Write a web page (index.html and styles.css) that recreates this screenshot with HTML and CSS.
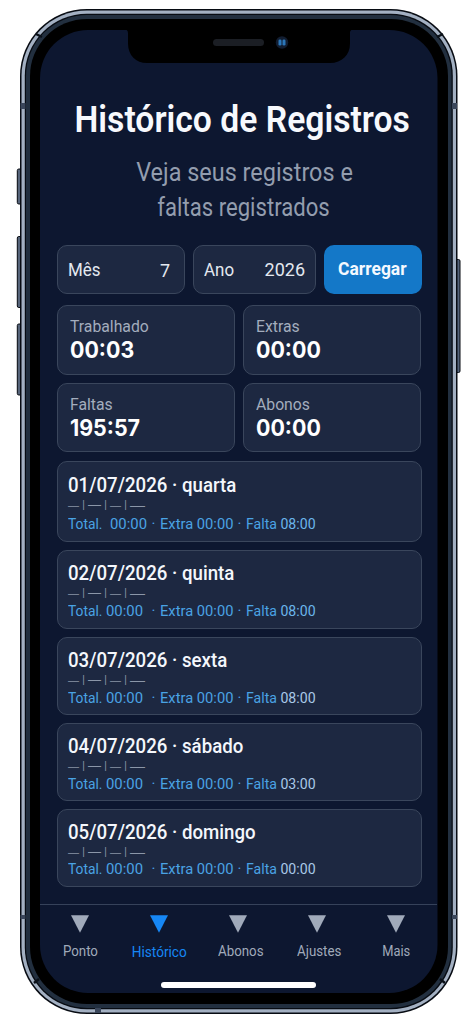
FILE: index.html
```html
<!DOCTYPE html>
<html lang="pt-BR">
<head>
<meta charset="utf-8">
<title>Histórico de Registros</title>
<link rel="stylesheet" href="styles.css">
</head>
<body>
<div class="stage">
<svg class="device" width="473" height="1024" viewBox="0 0 473 1024" aria-hidden="true">
  <g fill="#56647a" stroke="#05090f" stroke-width="1">
    <rect x="17.3" y="169" width="6" height="35" rx="1.5"/>
    <rect x="17.3" y="236.5" width="6" height="71" rx="1.5"/>
    <rect x="17.3" y="324" width="6" height="71" rx="1.5"/>
    <rect x="454" y="259.5" width="6" height="113" rx="1.5"/>
  </g>
  <rect x="20" y="9" width="437.5" height="1005" rx="67" fill="#070b12"/>
  <rect x="21.5" y="10.5" width="434.5" height="1002" rx="65.5" fill="#a3b0c2"/>
  <rect x="24.8" y="13.8" width="428" height="995.5" rx="62" fill="#070b12"/>
  <rect x="26" y="15" width="425.5" height="993" rx="61" fill="#222f3f"/>
  <rect x="30" y="19" width="418" height="985" rx="57" fill="#000"/>
  <g fill="#3a465a">
    <rect x="20.5" y="103" width="5" height="6"/>
    <rect x="452" y="103" width="5" height="6"/>
    <rect x="20.5" y="915" width="5" height="4"/>
    <rect x="452" y="915" width="5" height="4"/>
    <rect x="95" y="1008" width="6" height="5"/>
  </g>
  <path d="M36 34l6 3M437 37l6-3M34 983l5-4M440 979l5 4" stroke="#0a1018" stroke-width="2.5"/>
  <rect x="40" y="30" width="397.5" height="963" rx="48" fill="#0d1730"/>
  <path d="M124 29.500c3 0 4 1 4 4v10c0 12 8 19.500 19 19.500h183c12 0 20-8 20-19.500v-10c0-3 1-4 4-4z" fill="#000"/>
  <rect x="213" y="39" width="51" height="7" rx="3.5" fill="#1b1e24"/>
  <circle cx="282" cy="42.5" r="6.2" fill="#121d30"/>
  <rect x="278.5" y="39.500" width="3" height="6" rx="1.3" fill="#2b76b8"/>
  <rect x="282.5" y="39.500" width="3" height="6" rx="1.3" fill="#2b76b8"/>
</svg>
<div class="screen">
  <header class="head">
    <h1 class="title"><span>Histórico de Registros</span></h1>
    <p class="sub"><span>Veja seus registros e</span><span class="second">faltas registrados</span></p>
  </header>
  <div class="filters">
    <div class="field month"><span class="name">Mês</span><span class="low">7</span></div>
    <div class="field year"><span class="name">Ano</span><span>2026</span></div>
    <button class="load"><span>Carregar</span></button>
  </div>
  <div class="stats">
    <div class="stat"><span class="label">Trabalhado</span><b>00:03</b></div>
    <div class="stat"><span class="label">Extras</span><b>00:00</b></div>
    <div class="stat"><span class="label">Faltas</span><b>195:57</b></div>
    <div class="stat"><span class="label">Abonos</span><b>00:00</b></div>
  </div>
  <div class="days">
    <article class="day d1"><h2>01/07/2026 · quarta</h2><div class="marks"><i>—</i><s>|</s><i class="w13">—</i><s>|</s><i>—</i><s>|</s><i class="w15">—</i></div>
      <p class="tot"><span class="tl">Total.</span><span class="th">00:00</span><span class="dot">·</span><span class="ex">Extra 00:00</span><span class="dot">·</span><span class="fa">Falta <em>08:00</em></span></p></article>
    <article class="day d2"><h2>02/07/2026 · quinta</h2><div class="marks"><i>—</i><s>|</s><i class="w13">—</i><s>|</s><i>—</i><s>|</s><i class="w15">—</i></div>
      <p class="tot"><span class="tl">Total.</span><span class="th">00:00</span><span class="dot">·</span><span class="ex">Extra 00:00</span><span class="dot">·</span><span class="fa">Falta <em>08:00</em></span></p></article>
    <article class="day d3"><h2>03/07/2026 · sexta</h2><div class="marks"><i>—</i><s>|</s><i class="w13">—</i><s>|</s><i>—</i><s>|</s><i class="w15">—</i></div>
      <p class="tot"><span class="tl">Total.</span><span class="th">00:00</span><span class="dot">·</span><span class="ex">Extra 00:00</span><span class="dot">·</span><span class="fa">Falta <em>08:00</em></span></p></article>
    <article class="day d4"><h2>04/07/2026 · sábado</h2><div class="marks"><i>—</i><s>|</s><i class="w13">—</i><s>|</s><i>—</i><s>|</s><i class="w15">—</i></div>
      <p class="tot"><span class="tl">Total.</span><span class="th">00:00</span><span class="dot">·</span><span class="ex">Extra 00:00</span><span class="dot">·</span><span class="fa">Falta <em>03:00</em></span></p></article>
    <article class="day d5"><h2>05/07/2026 · domingo</h2><div class="marks"><i>—</i><s>|</s><i class="w13">—</i><s>|</s><i>—</i><s>|</s><i class="w15">—</i></div>
      <p class="tot"><span class="tl">Total.</span><span class="th">00:00</span><span class="dot">·</span><span class="ex">Extra 00:00</span><span class="dot">·</span><span class="fa">Falta <em>00:00</em></span></p></article>
  </div>
  <nav class="tabs">
    <a class="tab t1"><svg width="18" height="18" viewBox="0 0 18 18"><path d="M0 .3h18L9 17.700z"/></svg><span>Ponto</span></a>
    <a class="tab t2 on"><svg width="18" height="18" viewBox="0 0 18 18"><path d="M0 .3h18L9 17.700z"/></svg><span>Histórico</span></a>
    <a class="tab t3"><svg width="18" height="18" viewBox="0 0 18 18"><path d="M0 .3h18L9 17.700z"/></svg><span>Abonos</span></a>
    <a class="tab t4"><svg width="18" height="18" viewBox="0 0 18 18"><path d="M0 .3h18L9 17.700z"/></svg><span>Ajustes</span></a>
    <a class="tab t5"><svg width="18" height="18" viewBox="0 0 18 18"><path d="M0 .3h18L9 17.700z"/></svg><span>Mais</span></a>
  </nav>
  <div class="home"></div>
</div>
</div>
</body>
</html>
```
FILE: styles.css
```css
* { box-sizing: border-box; }
body { margin: 0; background: #fff; font-family: Roboto, "Liberation Sans", sans-serif; }
h1, h2, p { margin: 0; }
.stage { position: relative; width: 473px; height: 1024px; overflow: hidden; }
.device { position: absolute; inset: 0; }
.screen { position: relative; margin: 30px 0 0 40px; width: 397px; height: 963px; padding-top: 67px; display: flex; flex-direction: column; }

.head { height: 148px; display: flex; flex-direction: column; align-items: center; color: #f7f9fd; white-space: nowrap; }
.title { font-size: 36px; line-height: 46px; font-weight: 600; padding-left: 8px; }
.title span { display: inline-block; transform: scaleX(.936); }
.sub { margin-top: 12px; font-size: 25px; line-height: 35px; color: #939dae; padding-left: 12px; display: flex; flex-direction: column; align-items: center; }
.sub span { transform: scaleX(.938); }
.sub .second { transform: scaleX(.885); padding-right: 3px; }

.filters { display: flex; gap: 8px; padding-left: 17px; height: 49px; }
.field { display: flex; justify-content: space-between; align-items: center; border: 1px solid #3a465c; border-radius: 10px; background: #1d2841; color: #e3e8f0; font-size: 18px; }
.name { transform: scaleX(.94); transform-origin: left; }
.month { width: 128px; padding: 0 14px 0 10px; }
.year { width: 123px; padding: 0 10px 0 10px; }
.low { padding-top: 2px; }
.load { width: 98px; border: 0; border-radius: 10px; background: #1478c8; color: #f4f9ff; font: 700 18px Roboto, sans-serif; padding: 0 2px 2px 0; }
.load span { display: inline-block; transform: scaleX(.97); }

.stats { display: grid; grid-template-columns: 178px 178px; grid-template-rows: 70px 69px; gap: 8px; padding: 11px 0 0 17px; }
.stat { border: 1px solid #3a465c; border-radius: 10px; background: #1d2841; padding: 11px 0 0 12px; display: flex; flex-direction: column; align-items: flex-start; }
.label { font-size: 16px; line-height: 20px; color: #a3adbd; transform: scaleX(.985); transform-origin: left; }
.stat b { font: 700 23px/26px Inter, sans-serif; color: #fff; transform: scaleX(.93); transform-origin: left; }

.days { padding: 9px 0 0 17px; display: flex; flex-direction: column; gap: 8px; }
.day { width: 365px; height: 78px; border: 1px solid #3a465c; border-radius: 10px; background: #1d2841; padding: 11px 0 0 10px; }
.d1 { height: 81px; padding-top: 12px; }
.d2 { height: 79px; }
.day h2 { width: max-content; font-size: 19.5px; line-height: 24px; font-weight: 500; color: #f4f7fc; transform: scaleX(.957); transform-origin: left; }
.marks { display: flex; align-items: center; height: 14px; color: #8b96a8; font: 10px/14px "Liberation Sans", sans-serif; }
.marks i, .marks s { font-style: normal; text-decoration: none; }
.marks i { width: 11px; font-size: 11px; }
.marks .w13 { width: 13px; font-size: 13px; }
.marks .w15 { width: 15px; font-size: 15px; }
.marks s { width: 9px; text-align: center; }
.tot { display: flex; padding-top: 2px; font-size: 15px; line-height: 18px; color: #4aa3e4; white-space: nowrap; }
.tot span { transform-origin: left; }
.tot em { font-style: normal; color: #a9c9e8; }
.tl { width: 38px; transform: scaleX(.92); }
.th { width: 41px; transform: scaleX(.99); }
.d1 .tot { padding-top: 3px; }
.d1 .tl { width: 42px; }
.d1 .th { width: 37px; }
.d5 .tot { padding-top: 1px; }
.d1 em, .d2 em { color: #6bb6ec; }
.dot { width: 13px; text-align: center; }
.ex { width: 73px; transform: scaleX(.98); }
.fa { transform: scaleX(.94); }

.tabs { margin-top: 17px; border-top: 1px solid #36425a; height: 78px; display: flex; color: #a0aaba; padding-top: 10px; }
.tab { width: 79.4px; margin-left: -.2px; display: flex; flex-direction: column; align-items: center; font-size: 14px; gap: 10px; }
.tab svg { display: block; fill: currentColor; }
.tab span { transform: scaleX(.95); padding-left: 1px; }
.t2 span { padding-top: 1px; transform: scaleX(.975); }
.t3 span { padding-left: 7px; }
.t4 span { padding-left: 4px; }
.t5 span { transform: scaleX(.92); padding: 0; }
.on { color: #1687f5; }
.home { width: 155px; height: 6px; border-radius: 3px; background: #fff; margin-left: 121px; }
```
